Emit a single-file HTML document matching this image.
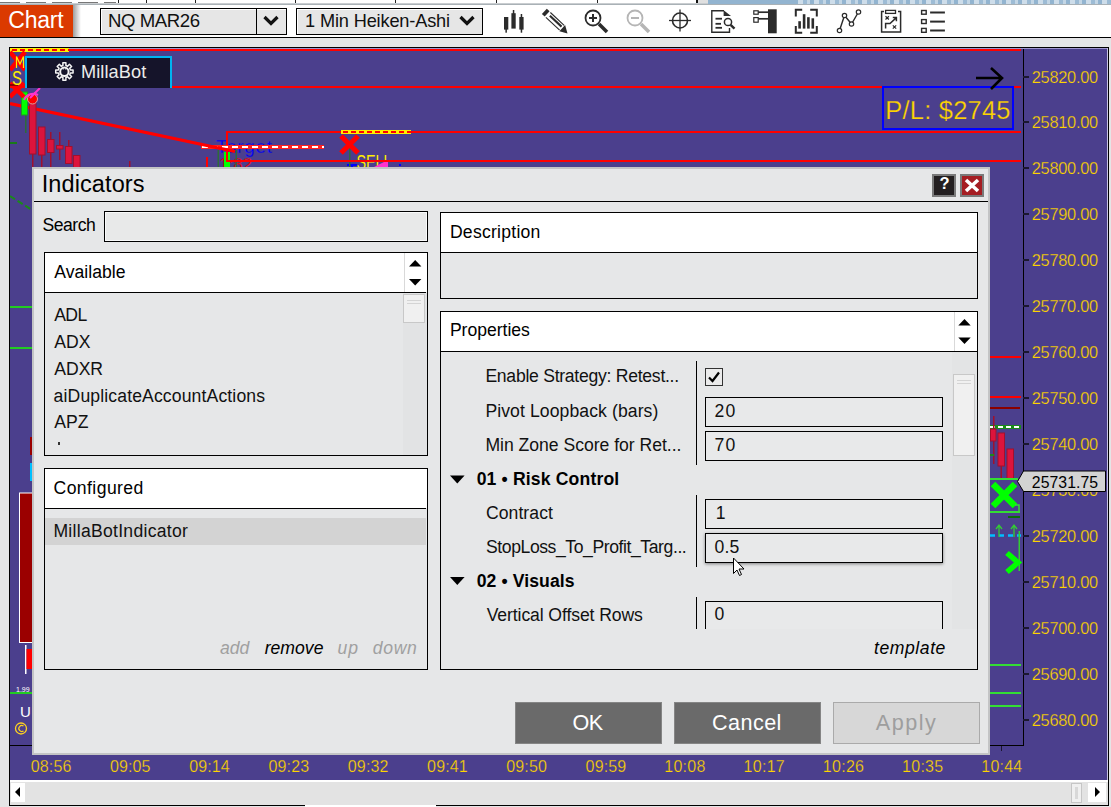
<!DOCTYPE html>
<html><head><meta charset="utf-8"><title>Indicators</title>
<style>
*{margin:0;padding:0;box-sizing:border-box}
html,body{width:1111px;height:807px;overflow:hidden;background:#e4e5e6;font-family:"Liberation Sans",sans-serif;position:relative}
.a{position:absolute}
.t{position:absolute;white-space:nowrap;line-height:1}
svg{position:absolute;left:0;top:0}
</style></head><body>

<div class="a" style="left:0px;top:0px;width:1111px;height:37px;background:#fff"></div>
<div class="a" style="left:0;top:2px;width:116px;height:1px;background:repeating-linear-gradient(90deg,#777 0 20px,transparent 20px 26px)"></div>
<div class="a" style="left:118px;top:0px;width:1px;height:4px;background:#222"></div>
<div class="a" style="left:146px;top:0px;width:1px;height:4px;background:#222"></div>
<div class="a" style="left:195px;top:0px;width:1px;height:4px;background:#222"></div>
<div class="a" style="left:295px;top:0px;width:1px;height:4px;background:#222"></div>
<div class="a" style="left:395px;top:0px;width:1px;height:4px;background:#222"></div>
<div class="a" style="left:496px;top:0px;width:1px;height:4px;background:#222"></div>
<div class="a" style="left:597px;top:0px;width:1px;height:4px;background:#222"></div>
<div class="a" style="left:696px;top:0px;width:2px;height:4px;background:#111"></div>
<div class="a" style="left:698px;top:0px;width:10px;height:4px;background:#e0e0e0"></div>
<div class="a" style="left:0px;top:3px;width:1111px;height:1px;background:#c9cdd0"></div>
<div class="a" style="left:0px;top:4px;width:1111px;height:1px;background:#a9b1b6"></div>
<div class="a" style="left:708px;top:0px;width:403px;height:4px;background:#92b4d0"></div>
<div class="a" style="left:798px;top:0;width:313px;height:4px;background:repeating-linear-gradient(90deg,rgba(255,255,255,.55) 0 5px,rgba(255,255,255,.1) 5px 9px,rgba(255,255,255,.45) 9px 12px,transparent 12px 16px)"></div>
<div class="a" style="left:0px;top:5px;width:73px;height:32px;background:#db3a00"></div>
<div class="a" style="left:73px;top:5px;width:8px;height:32px;background:linear-gradient(90deg,rgba(0,0,0,.38),rgba(0,0,0,0))"></div>
<div class="t" style="left:8.3px;top:9px;font-size:23.0px;color:#fff;letter-spacing:-0.24px;">Chart</div>
<div class="a" style="left:0px;top:37px;width:1111px;height:1px;background:#000"></div>
<div class="a" style="left:100px;top:8px;width:187px;height:27px;background:#e6e6e6;border:1px solid #000;box-shadow:inset 1px 1px 0 #fff"></div>
<div class="a" style="left:256px;top:8px;width:1px;height:27px;background:#000"></div>
<div class="t" style="left:107.9px;top:12px;font-size:18.6px;color:#111;letter-spacing:-0.40px;">NQ MAR26</div>
<div class="a" style="left:296px;top:8px;width:187px;height:27px;background:#e6e6e6;border:1px solid #000;box-shadow:inset 1px 1px 0 #fff"></div>
<div class="t" style="left:305.1px;top:12px;font-size:18.2px;color:#111;letter-spacing:-0.16px;">1 Min Heiken-Ashi</div>
<svg width="1111" height="40" style="left:0;top:0"><polyline points="264.5,17 271,23.5 277.5,17" fill="none" stroke="#111" stroke-width="3.2"/><polyline points="460.5,17 467,23.5 473.5,17" fill="none" stroke="#111" stroke-width="3.2"/></svg>
<svg width="1111" height="40" style="left:0;top:0" fill="none" stroke="#2b2b2b">
<g fill="#2b2b2b" stroke="none">
<rect x="504" y="17" width="4.3" height="12.6"/><rect x="505.4" y="29" width="1.5" height="3.7"/>
<rect x="511.4" y="13.2" width="4.3" height="15.4"/><rect x="512.8" y="10" width="1.5" height="4"/>
<rect x="519.3" y="17" width="4.3" height="12.6"/><rect x="520.7" y="14" width="1.5" height="3.5"/><rect x="520.7" y="29" width="1.5" height="3.7"/>
</g>
<g transform="translate(555.3,21.6) rotate(43)">
<rect x="-15" y="-3.6" width="3.8" height="7.2" fill="#2b2b2b" stroke="none"/>
<line x1="-9.8" y1="-3.3" x2="9" y2="-3.3" stroke-width="1.1"/>
<line x1="-9.8" y1="3.3" x2="9" y2="3.3" stroke-width="1.1"/>
<line x1="-8" y1="-0.6" x2="8" y2="-0.6" stroke-width="2.1"/>
<polygon points="9.5,-4.2 17,0.3 9.5,4.2" fill="#2b2b2b" stroke="none"/>
</g>
<circle cx="593" cy="18" r="7.5" stroke-width="1.8"/>
<line x1="589" y1="18" x2="597" y2="18" stroke-width="2"/><line x1="593" y1="14" x2="593" y2="22" stroke-width="2"/>
<line x1="599" y1="24" x2="607" y2="32" stroke-width="3.5"/>
<g stroke="#b5b5b5">
<circle cx="635" cy="18" r="7.5" stroke-width="1.8"/>
<line x1="631" y1="18" x2="639" y2="18" stroke-width="2"/>
<line x1="641" y1="24" x2="649" y2="32" stroke-width="3.5"/>
</g>
<circle cx="680" cy="20.5" r="7.5" stroke-width="1.6"/>
<line x1="669" y1="20.5" x2="691" y2="20.5" stroke-width="1.3"/>
<line x1="680" y1="9.5" x2="680" y2="31.5" stroke-width="1.3"/>
<path d="M724,10.8 H711.8 V32.2 H729.5 V28" stroke-width="1.4"/>
<polygon points="723.6,10.2 731,16 723.6,16" fill="#2b2b2b" stroke="none"/>
<line x1="715.5" y1="18.7" x2="722" y2="18.7" stroke-width="1.8"/>
<line x1="715.5" y1="23.8" x2="721" y2="23.8" stroke-width="1.8"/>
<line x1="715.5" y1="27.8" x2="722" y2="27.8" stroke-width="1.8"/>
<circle cx="728" cy="22" r="3.6" stroke-width="1.5"/>
<line x1="730.6" y1="24.8" x2="734.5" y2="28.7" stroke-width="2.4"/>
<rect x="768" y="9.3" width="8.7" height="24" fill="#2b2b2b" stroke="none"/>
<rect x="753.8" y="10.8" width="4.4" height="3.4" stroke-width="1.2"/>
<rect x="753.8" y="17.6" width="4.4" height="4.6" stroke-width="1.2"/>
<line x1="758.2" y1="12.2" x2="769" y2="12.2" stroke-width="1.7"/>
<line x1="758.2" y1="18.8" x2="769" y2="18.8" stroke-width="1.7"/>
<path d="M795.8,16.5 V9.8 H802.2 M810.2,9.8 H816.8 V16.5 M816.8,25.9 V32.8 H810.2 M802.2,32.8 H795.8 V25.9" stroke-width="2"/>
<g fill="#2b2b2b" stroke="none">
<rect x="798.3" y="21.2" width="2.6" height="7.4"/><rect x="802.8" y="14.2" width="2.6" height="14.4"/>
<rect x="807.1" y="17.2" width="2.6" height="11.4"/><rect x="811.5" y="18.3" width="2.6" height="10.3"/>
</g>
<polyline points="839.5,30.5 844.5,15.5 851.5,24 858.5,12" stroke-width="1.4"/>
<circle cx="839.5" cy="30.5" r="2.2" fill="#fff" stroke-width="1.2"/>
<circle cx="844.5" cy="15.5" r="2.2" fill="#fff" stroke-width="1.2"/>
<circle cx="851.5" cy="24" r="2.2" fill="#fff" stroke-width="1.2"/>
<circle cx="858.5" cy="12" r="2.2" fill="#fff" stroke-width="1.2"/>
<path d="M884,11.6 H881.6 V32 H900.6 V11.6 H898" stroke-width="1.5"/>
<rect x="885.6" y="10.4" width="9.9" height="3" stroke-width="1.3"/>
<path d="M885.5,16.3 l3.4,3.2 M888.9,16.3 l-3.4,3.2 M892.8,25.4 l3.4,3.2 M896.2,25.4 l-3.4,3.2" stroke-width="1.2"/>
<path d="M885.6,28.6 V23.6 H890 L896.4,17.6 M892.8,17.6 H896.4 V21.2" stroke-width="1.5"/>
<rect x="921.6" y="10.5" width="4.6" height="3.7" stroke-width="1.4"/>
<rect x="921.6" y="19.6" width="4.6" height="3.9" stroke-width="1.4"/>
<rect x="921.6" y="28.4" width="4.6" height="3.9" stroke-width="1.4"/>
<line x1="930.1" y1="12.5" x2="944.9" y2="12.5" stroke-width="2"/>
<line x1="930.1" y1="21.6" x2="944.9" y2="21.6" stroke-width="2"/>
<line x1="930.1" y1="30.5" x2="944.9" y2="30.5" stroke-width="2"/>
</svg>
<div class="a" style="left:9px;top:47px;width:1100px;height:759px;border:1px solid #000;background:#e3e3e3"></div>
<div class="a" style="left:10px;top:48px;width:1098px;height:732px;background:#4b3f8d"></div>
<div class="a" style="left:10px;top:780px;width:1098px;height:2px;background:#fff"></div>
<svg width="1111" height="807"><rect x="11" y="783" width="14" height="19" fill="#fff"/><polygon points="15,792 20,787 20,797" fill="#000"/><rect x="1071.5" y="783.5" width="10" height="19" fill="#f0f0f0" stroke="#c6c6c6"/><rect x="1075" y="787" width="3" height="12" fill="#d8d8d8"/><rect x="1088" y="783" width="18" height="19" fill="#fff"/><polygon points="1095,787 1100,792 1095,797" fill="#000"/></svg>
<div class="a" style="left:305px;top:805px;width:131px;height:2px;background:#fff"></div>
<div class="a" style="left:1023px;top:48px;width:1px;height:698px;background:#000"></div>
<div class="a" style="left:10px;top:745px;width:1014px;height:1px;background:#000"></div>
<div class="a" style="left:1001px;top:746px;width:1px;height:5px;background:#1b1730"></div>
<div class="a" style="left:10px;top:48px;width:1098px;height:1px;background:#9d94d0"></div>
<div class="a" style="left:1107px;top:48px;width:1px;height:732px;background:#c8c4e4"></div>
<div class="a" style="left:1023px;top:76px;width:6px;height:2px;background:#1b1730"></div>
<div class="t" style="left:1031.8px;top:69px;font-size:16.4px;color:#ffd400;letter-spacing:-0.30px;-webkit-text-stroke:0.25px #4b3f8d;">25820.00</div>
<div class="a" style="left:1023px;top:121px;width:6px;height:2px;background:#1b1730"></div>
<div class="t" style="left:1031.8px;top:114px;font-size:16.4px;color:#ffd400;letter-spacing:-0.30px;-webkit-text-stroke:0.25px #4b3f8d;">25810.00</div>
<div class="a" style="left:1023px;top:167px;width:6px;height:2px;background:#1b1730"></div>
<div class="t" style="left:1031.8px;top:160px;font-size:16.4px;color:#ffd400;letter-spacing:-0.30px;-webkit-text-stroke:0.25px #4b3f8d;">25800.00</div>
<div class="a" style="left:1023px;top:213px;width:6px;height:2px;background:#1b1730"></div>
<div class="t" style="left:1031.8px;top:206px;font-size:16.4px;color:#ffd400;letter-spacing:-0.30px;-webkit-text-stroke:0.25px #4b3f8d;">25790.00</div>
<div class="a" style="left:1023px;top:259px;width:6px;height:2px;background:#1b1730"></div>
<div class="t" style="left:1031.8px;top:252px;font-size:16.4px;color:#ffd400;letter-spacing:-0.30px;-webkit-text-stroke:0.25px #4b3f8d;">25780.00</div>
<div class="a" style="left:1023px;top:305px;width:6px;height:2px;background:#1b1730"></div>
<div class="t" style="left:1031.8px;top:298px;font-size:16.4px;color:#ffd400;letter-spacing:-0.30px;-webkit-text-stroke:0.25px #4b3f8d;">25770.00</div>
<div class="a" style="left:1023px;top:351px;width:6px;height:2px;background:#1b1730"></div>
<div class="t" style="left:1031.8px;top:344px;font-size:16.4px;color:#ffd400;letter-spacing:-0.30px;-webkit-text-stroke:0.25px #4b3f8d;">25760.00</div>
<div class="a" style="left:1023px;top:397px;width:6px;height:2px;background:#1b1730"></div>
<div class="t" style="left:1031.8px;top:390px;font-size:16.4px;color:#ffd400;letter-spacing:-0.30px;-webkit-text-stroke:0.25px #4b3f8d;">25750.00</div>
<div class="a" style="left:1023px;top:443px;width:6px;height:2px;background:#1b1730"></div>
<div class="t" style="left:1031.8px;top:436px;font-size:16.4px;color:#ffd400;letter-spacing:-0.30px;-webkit-text-stroke:0.25px #4b3f8d;">25740.00</div>
<div class="a" style="left:1023px;top:489px;width:6px;height:2px;background:#1b1730"></div>
<div class="t" style="left:1031.8px;top:482px;font-size:16.4px;color:#ffd400;letter-spacing:-0.30px;-webkit-text-stroke:0.25px #4b3f8d;">25730.00</div>
<div class="a" style="left:1023px;top:535px;width:6px;height:2px;background:#1b1730"></div>
<div class="t" style="left:1031.8px;top:528px;font-size:16.4px;color:#ffd400;letter-spacing:-0.30px;-webkit-text-stroke:0.25px #4b3f8d;">25720.00</div>
<div class="a" style="left:1023px;top:581px;width:6px;height:2px;background:#1b1730"></div>
<div class="t" style="left:1031.8px;top:574px;font-size:16.4px;color:#ffd400;letter-spacing:-0.30px;-webkit-text-stroke:0.25px #4b3f8d;">25710.00</div>
<div class="a" style="left:1023px;top:627px;width:6px;height:2px;background:#1b1730"></div>
<div class="t" style="left:1031.8px;top:620px;font-size:16.4px;color:#ffd400;letter-spacing:-0.30px;-webkit-text-stroke:0.25px #4b3f8d;">25700.00</div>
<div class="a" style="left:1023px;top:673px;width:6px;height:2px;background:#1b1730"></div>
<div class="t" style="left:1031.8px;top:666px;font-size:16.4px;color:#ffd400;letter-spacing:-0.30px;-webkit-text-stroke:0.25px #4b3f8d;">25690.00</div>
<div class="a" style="left:1023px;top:719px;width:6px;height:2px;background:#1b1730"></div>
<div class="t" style="left:1031.8px;top:712px;font-size:16.4px;color:#ffd400;letter-spacing:-0.30px;-webkit-text-stroke:0.25px #4b3f8d;">25680.00</div>
<div class="t" style="left:30.8px;top:759px;font-size:16.0px;color:#ffd400;letter-spacing:0.14px;-webkit-text-stroke:0.25px #4b3f8d;">08:56</div>
<div class="t" style="left:110.0px;top:759px;font-size:16.0px;color:#ffd400;letter-spacing:0.12px;-webkit-text-stroke:0.25px #4b3f8d;">09:05</div>
<div class="t" style="left:189.3px;top:759px;font-size:16.0px;color:#ffd400;letter-spacing:0.08px;-webkit-text-stroke:0.25px #4b3f8d;">09:14</div>
<div class="t" style="left:268.5px;top:759px;font-size:16.0px;color:#ffd400;letter-spacing:0.14px;-webkit-text-stroke:0.25px #4b3f8d;">09:23</div>
<div class="t" style="left:347.8px;top:759px;font-size:16.0px;color:#ffd400;letter-spacing:0.16px;-webkit-text-stroke:0.25px #4b3f8d;">09:32</div>
<div class="t" style="left:427.1px;top:759px;font-size:16.0px;color:#ffd400;letter-spacing:0.16px;-webkit-text-stroke:0.25px #4b3f8d;">09:41</div>
<div class="t" style="left:506.3px;top:759px;font-size:16.0px;color:#ffd400;letter-spacing:0.12px;-webkit-text-stroke:0.25px #4b3f8d;">09:50</div>
<div class="t" style="left:585.6px;top:759px;font-size:16.0px;color:#ffd400;letter-spacing:0.14px;-webkit-text-stroke:0.25px #4b3f8d;">09:59</div>
<div class="t" style="left:664.3px;top:759px;font-size:16.0px;color:#ffd400;letter-spacing:0.26px;-webkit-text-stroke:0.25px #4b3f8d;">10:08</div>
<div class="t" style="left:743.5px;top:759px;font-size:16.0px;color:#ffd400;letter-spacing:0.30px;-webkit-text-stroke:0.25px #4b3f8d;">10:17</div>
<div class="t" style="left:822.8px;top:759px;font-size:16.0px;color:#ffd400;letter-spacing:0.28px;-webkit-text-stroke:0.25px #4b3f8d;">10:26</div>
<div class="t" style="left:902.1px;top:759px;font-size:16.0px;color:#ffd400;letter-spacing:0.26px;-webkit-text-stroke:0.25px #4b3f8d;">10:35</div>
<div class="t" style="left:981.3px;top:759px;font-size:16.0px;color:#ffd400;letter-spacing:0.22px;-webkit-text-stroke:0.25px #4b3f8d;">10:44</div>
<svg width="1111" height="807"><defs><clipPath id="cc"><rect x="10" y="48" width="1013" height="697"/></clipPath></defs><g clip-path="url(#cc)">
<rect x="10" y="49" width="1011" height="2" fill="#ff0000"/>
<rect x="10" y="48" width="59" height="4" fill="#ffee00"/>
<line x1="12" y1="50" x2="69" y2="50" stroke="#ff0000" stroke-width="2" stroke-dasharray="5 3"/>
<rect x="10" y="86" width="1011" height="2" fill="#ff0000"/>
<text x="356.5" y="169" font-size="21" fill="#ffee00" font-family="Liberation Sans" textLength="35" lengthAdjust="spacingAndGlyphs">SELL</text>
<polygon points="372,168 388,160 388,168" fill="#ff33cc"/>
<rect x="347" y="164" width="10" height="2" fill="#0000ff"/><rect x="351" y="164" width="2" height="4" fill="#0000ff"/>
<rect x="399" y="164" width="2" height="2" fill="#0000ff"/>
<rect x="349" y="148" width="1.5" height="20" fill="#2e6b3a"/>
<text x="216" y="153" font-size="19" fill="#0000ff" font-family="Liberation Sans" textLength="56" stroke="#4b3f8d" stroke-width="0.3">Target</text>
<text x="219" y="170" font-size="17" fill="#ff0000" font-family="Liberation Sans" stroke="#4b3f8d" stroke-width="0.3">1:82</text>
<rect x="206" y="157" width="2" height="11" fill="#ff0000"/>
<rect x="217.5" y="150" width="1.5" height="18" fill="#2e6b3a"/>
<rect x="235.5" y="150" width="1.5" height="18" fill="#2e6b3a"/>
<rect x="224" y="152" width="6" height="16" fill="#00ff00"/>
<rect x="226" y="131" width="795" height="2" fill="#ff0000"/>
<rect x="226" y="131" width="2" height="31" fill="#ff0000"/>
<rect x="226" y="160" width="795" height="2" fill="#ff0000"/>
<rect x="201" y="145" width="123" height="4" fill="#ff2020"/>
<line x1="202" y1="147" x2="324" y2="147" stroke="#ffffff" stroke-width="2" stroke-dasharray="6 4"/>
<line x1="10" y1="103.5" x2="235" y2="151.5" stroke="#ff0000" stroke-width="3.3"/>
<rect x="341" y="130" width="70" height="4" fill="#ffee00"/>
<line x1="343" y1="132" x2="411" y2="132" stroke="#ff0000" stroke-width="2" stroke-dasharray="5 3"/>
<path d="M341,136 L358,153 M358,136 L341,153" stroke="#ff0000" stroke-width="5.2"/>
<rect x="25" y="115" width="1.5" height="18" fill="#2e6b3a"/>
<rect x="21.5" y="92" width="6" height="23" fill="#00ff00" stroke="#1d9b1d" stroke-width="1"/>
<g fill="#dc143c" stroke="#a0102e" stroke-width="1">
<rect x="29.5" y="100" width="6.5" height="54"/>
<rect x="38.5" y="127" width="6.5" height="28"/>
<rect x="47.5" y="139.5" width="6.5" height="13"/>
<rect x="56.5" y="145.5" width="6.5" height="3.5"/>
<rect x="65.5" y="146.5" width="6.5" height="17"/>
<rect x="73.5" y="155.5" width="6.5" height="12"/>
</g>
<g fill="#a0102e">
<rect x="32" y="154" width="1.5" height="13"/><rect x="41" y="155" width="1.5" height="12"/>
<rect x="50" y="132" width="1.5" height="8"/><rect x="50" y="152" width="1.5" height="15"/>
<rect x="59" y="132" width="1.5" height="14"/><rect x="59" y="149" width="1.5" height="11"/>
<rect x="68" y="140" width="1.5" height="7"/>
<rect x="129" y="161" width="1.5" height="6"/>
</g>
<rect x="10" y="142" width="7" height="2" fill="#1a7a1a"/>
<circle cx="32.5" cy="99" r="5" fill="#ff0000" stroke="#d8a0a0" stroke-width="1"/>
<path d="M10,52 L25,70 M25,52 L10,70" stroke="#ff0000" stroke-width="4.5"/>
<path d="M10,83 L24,97 M24,83 L10,97" stroke="#ff0000" stroke-width="4.5"/>
<rect x="10" y="84" width="8" height="2" fill="#8b0000"/>
<path d="M16.5,68 V56.5 L20,64 L23.5,56.5 V68" stroke="#ffee00" stroke-width="1.2" fill="none"/>
<text x="12" y="85" font-size="20" fill="#ffee00" font-family="Liberation Sans" textLength="10" lengthAdjust="spacingAndGlyphs">S</text>
<path d="M24,100 C 26,95 32,92 38,95 M30,98 L40,88" stroke="#ff33cc" stroke-width="2" fill="none"/>
<rect x="883" y="87" width="130" height="42" fill="none" stroke="#0000ff" stroke-width="2"/>
<path d="M976,78 H1001 M991,68 L1002,78 L991,89" stroke="#000" stroke-width="2.6" fill="none"/>
<line x1="10" y1="196" x2="32" y2="210" stroke="#1a8a1a" stroke-width="2" stroke-dasharray="6 3"/>
<rect x="10" y="306" width="22" height="2" fill="#22cc22"/>
<rect x="10" y="347" width="22" height="2" fill="#22cc22"/>
<rect x="30" y="437" width="2" height="18" fill="#9b0000"/>
<rect x="30" y="463" width="2" height="18" fill="#00c0ff"/>
<rect x="19.5" y="493" width="13" height="149.5" fill="#9b0000" stroke="#ffffff" stroke-width="1"/>
<rect x="25" y="645" width="1.5" height="29" fill="#ffffff"/>
<rect x="26.5" y="649" width="6" height="20" fill="#ff0000"/>
<rect x="10" y="692" width="22" height="2" fill="#22cc22"/>
<text x="16" y="692" font-size="7" fill="#ffffff" font-family="Liberation Sans">1.99</text>
<text x="20" y="717" font-size="15" fill="#ffffff" font-family="Liberation Sans">U</text>
<circle cx="21" cy="728.5" r="5.5" fill="none" stroke="#ffd21f" stroke-width="1.3"/>
<path d="M23.5,726 A3,3 0 1 0 23.5,731" fill="none" stroke="#ffd21f" stroke-width="1.2"/>
<rect x="990" y="356" width="31" height="2" fill="#ff0000"/>
<rect x="990" y="396" width="31" height="2" fill="#ff0000"/>
<rect x="990" y="407" width="30" height="2" fill="#8b0000"/>
<rect x="990" y="425" width="31" height="4" fill="#1a8a1a"/>
<line x1="990" y1="427" x2="1021" y2="427" stroke="#fff" stroke-width="2" stroke-dasharray="5 3"/>
<g fill="#a0102e">
<rect x="993" y="416" width="1.5" height="48"/><rect x="1000.5" y="466" width="1.5" height="14"/>
</g>
<g fill="#dc143c" stroke="#a0102e" stroke-width="1">
<rect x="990.5" y="429" width="5.5" height="12"/>
<rect x="998" y="433" width="6.5" height="33"/>
<rect x="1007" y="449" width="6.5" height="30"/>
</g>
<rect x="990" y="454" width="4" height="2" fill="#1a8a1a"/>
<rect x="990" y="478" width="28" height="2" fill="#33dd33"/>
<rect x="990" y="511" width="30" height="2" fill="#33dd33"/>
<rect x="1008" y="516" width="12" height="2" fill="#0a6a0a"/>
<path d="M993,484 L1015,506 M1015,484 L993,506" stroke="#00ff00" stroke-width="6.5"/>
<path d="M1015,505 H1019 V513" stroke="#33dd33" stroke-width="1.5" fill="none"/>
<line x1="990" y1="535.5" x2="1021" y2="535.5" stroke="#00bfff" stroke-width="2.5" stroke-dasharray="5 4"/>
<path d="M999,537 V526 M996,529 L999,525 L1002,529 M1014,537 V526 M1011,529 L1014,525 L1017,529" stroke="#33cc33" stroke-width="1.3" fill="none"/>
<rect x="1018.5" y="531" width="1.5" height="40" fill="#33cc33"/>
<path d="M1007,553 L1018,562.5 L1007,572" stroke="#00ff00" stroke-width="5.5" fill="none"/>
<rect x="990" y="664" width="31" height="2" fill="#33dd33"/>
<rect x="990" y="692" width="31" height="2" fill="#33dd33"/>
<rect x="990" y="705" width="31" height="2" fill="#33dd33"/>
</g>
<polygon points="1017.5,481.5 1023.5,471 1105.5,471 1105.5,491.5 1023.5,491.5" fill="#d3d3d3" stroke="#000" stroke-width="1"/>
</svg>
<div class="t" style="left:885.3px;top:98px;font-size:25.4px;color:#ffd400;letter-spacing:0.26px;-webkit-text-stroke:0.25px #4b3f8d;">P/L: $2745</div>
<div class="t" style="left:1031.8px;top:475px;font-size:15.8px;color:#000;letter-spacing:0.05px;">25731.75</div>
<div class="a" style="left:25px;top:56px;width:147px;height:32px;background:#15142a;border:2px solid #00b4f0;border-bottom:none"></div>
<svg width="1111" height="807"><g fill="none" stroke="#f4f4f4" stroke-width="1.5" stroke-linejoin="round">
<path d="M62.90,65.48 L62.87,62.83 L65.93,62.83 L65.90,65.48 L67.59,66.19 L69.45,64.29 L71.61,66.45 L69.71,68.31 L70.42,70.00 L73.07,69.97 L73.07,73.03 L70.42,73.00 L69.71,74.69 L71.61,76.55 L69.45,78.71 L67.59,76.81 L65.90,77.52 L65.93,80.17 L62.87,80.17 L62.90,77.52 L61.21,76.81 L59.35,78.71 L57.19,76.55 L59.09,74.69 L58.38,73.00 L55.73,73.03 L55.73,69.97 L58.38,70.00 L59.09,68.31 L57.19,66.45 L59.35,64.29 L61.21,66.19 Z"/>
<circle cx="64.4" cy="71.8" r="4.2" stroke-width="2"/>
</g><g fill="#f4f4f4"><rect x="62.6" y="68.3" width="1.2" height="1.2"/><rect x="65.2" y="68.3" width="1.2" height="1.2"/></g></svg>
<div class="t" style="left:80.9px;top:63px;font-size:18.2px;color:#ececec;letter-spacing:0.11px;">MillaBot</div>
<div class="a" style="left:32px;top:167px;width:958px;height:588px;background:#e6e7e8;border:2px solid #c3c4c5"></div>
<div class="a" style="left:34px;top:201px;width:954px;height:1px;background:#000"></div>
<div class="t" style="left:41.7px;top:173px;font-size:23.5px;color:#000;letter-spacing:0.10px;">Indicators</div>
<div class="a" style="left:932px;top:174px;width:24px;height:23px;background:#231f20;border:2px solid #7a7a7a"></div>
<div class="a" style="left:960px;top:174px;width:24px;height:23px;background:#a51d22;border:2px solid #7a7a7a"></div>
<svg width="1111" height="807">
<text x="944.5" y="188.8" font-size="16.5" font-weight="bold" fill="#fff" text-anchor="middle" font-family="Liberation Sans">?</text>
<path d="M966,180 L978,191 M978,180 L966,191" stroke="#fff" stroke-width="3.6"/>
</svg>
<div class="t" style="left:42.6px;top:217px;font-size:17.6px;color:#000;letter-spacing:-0.53px;">Search</div>
<div class="a" style="left:104px;top:211px;width:324px;height:31px;background:#e8e9e9;border:1px solid #000;box-shadow:inset 0 0 0 1px rgba(255,255,255,.75)"></div>
<div class="a" style="left:44px;top:252px;width:384px;height:204px;border:1px solid #000;background:#e6e7e8"></div>
<div class="a" style="left:45px;top:253px;width:382px;height:39px;background:#fff"></div>
<div class="a" style="left:45px;top:292px;width:381px;height:1px;background:#000"></div>
<div class="a" style="left:404px;top:253px;width:1px;height:39px;background:#d9d9d9"></div>
<div class="t" style="left:54.2px;top:264px;font-size:17.6px;color:#000;letter-spacing:0.03px;">Available</div>
<svg width="1111" height="807">
<rect x="403" y="293" width="24" height="162" fill="#e2e3e4"/>
<polygon points="409,266.5 415.2,260 421.4,266.5" fill="#000"/>
<polygon points="409,279 415.2,285.5 421.4,279" fill="#000"/>
<rect x="403.5" y="294.5" width="21" height="28" fill="#f0f0f0" stroke="#c8c8c8"/>
<line x1="407" y1="300.5" x2="421" y2="300.5" stroke="#d4d4d4"/>
<line x1="407" y1="303.5" x2="421" y2="303.5" stroke="#d4d4d4"/>
</svg>
<div class="t" style="left:54.2px;top:307px;font-size:17.6px;color:#111;letter-spacing:-0.56px;">ADL</div>
<div class="t" style="left:54.2px;top:334px;font-size:17.6px;color:#111;">ADX</div>
<div class="t" style="left:54.2px;top:361px;font-size:17.6px;color:#111;">ADXR</div>
<div class="t" style="left:53.6px;top:388px;font-size:17.6px;color:#111;letter-spacing:0.13px;">aiDuplicateAccountActions</div>
<div class="t" style="left:54.2px;top:414px;font-size:17.6px;color:#111;">APZ</div>
<div class="a" style="left:58px;top:442px;width:2px;height:3px;background:#333"></div>
<div class="a" style="left:44px;top:468px;width:384px;height:202px;border:1px solid #000;background:#e6e7e8"></div>
<div class="a" style="left:45px;top:469px;width:382px;height:39px;background:#fff"></div>
<div class="a" style="left:45px;top:508px;width:381px;height:1px;background:#000"></div>
<div class="t" style="left:53.5px;top:480px;font-size:17.6px;color:#000;letter-spacing:0.42px;">Configured</div>
<div class="a" style="left:45px;top:518px;width:381px;height:27px;background:#d3d3d3"></div>
<div class="t" style="left:53.4px;top:523px;font-size:17.6px;color:#111;letter-spacing:0.28px;">MillaBotIndicator</div>
<div class="t" style="left:219.9px;top:640px;font-size:17.6px;color:#a0a0a0;font-style:italic;">add</div>
<div class="t" style="left:264.7px;top:640px;font-size:17.6px;color:#000;font-style:italic;letter-spacing:0.02px;">remove</div>
<div class="t" style="left:337.6px;top:640px;font-size:17.6px;color:#a0a0a0;font-style:italic;letter-spacing:0.90px;">up</div>
<div class="t" style="left:372.8px;top:640px;font-size:17.6px;color:#a0a0a0;font-style:italic;letter-spacing:0.65px;">down</div>
<div class="a" style="left:440px;top:212px;width:538px;height:87px;border:1px solid #000;background:#e6e7e8"></div>
<div class="a" style="left:441px;top:213px;width:536px;height:39px;background:#fff"></div>
<div class="a" style="left:441px;top:252px;width:536px;height:1px;background:#000"></div>
<div class="t" style="left:449.9px;top:224px;font-size:17.6px;color:#000;letter-spacing:0.25px;">Description</div>
<div class="a" style="left:440px;top:311px;width:538px;height:359px;border:1px solid #000;background:#e6e7e8"></div>
<div class="a" style="left:441px;top:312px;width:536px;height:39px;background:#fff"></div>
<div class="a" style="left:441px;top:351px;width:536px;height:1px;background:#000"></div>
<div class="a" style="left:954px;top:312px;width:1px;height:39px;background:#d9d9d9"></div>
<div class="t" style="left:449.9px;top:322px;font-size:17.6px;color:#000;letter-spacing:-0.03px;">Properties</div>
<svg width="1111" height="807">
<rect x="952" y="352" width="25" height="277" fill="#e3e4e5"/>
<polygon points="958.3,325.5 964.5,319 970.7,325.5" fill="#000"/>
<polygon points="958.3,337.5 964.5,344 970.7,337.5" fill="#000"/>
<rect x="953.5" y="374.5" width="21" height="81" fill="#f0f0f0" stroke="#c8c8c8"/>
<line x1="957" y1="380.5" x2="971" y2="380.5" stroke="#d4d4d4"/>
<line x1="957" y1="383.5" x2="971" y2="383.5" stroke="#d4d4d4"/>
</svg>
<div class="a" style="left:696px;top:361px;width:1px;height:104px;background:#000"></div>
<div class="a" style="left:696px;top:495px;width:1px;height:72px;background:#000"></div>
<div class="a" style="left:696px;top:597px;width:1px;height:32px;background:#000"></div>
<div class="t" style="left:485.4px;top:368px;font-size:17.6px;color:#111;letter-spacing:-0.27px;">Enable Strategy: Retest...</div>
<div class="a" style="left:705px;top:368px;width:18px;height:18px;background:#ebebeb;border:1px solid #333"></div>
<svg width="1111" height="807"><path d="M709,377.5 L712.5,381 L719,372.5" stroke="#000" stroke-width="2.2" fill="none"/></svg>
<div class="t" style="left:485.4px;top:403px;font-size:17.6px;color:#111;letter-spacing:0.09px;">Pivot Loopback (bars)</div>
<div class="a" style="left:705px;top:397px;width:238px;height:30px;background:#e8e9ea;border:1px solid #000;"></div>
<div class="t" style="left:714.5px;top:403px;font-size:17.6px;color:#111;letter-spacing:1.15px;">20</div>
<div class="t" style="left:485.4px;top:437px;font-size:17.6px;color:#111;letter-spacing:-0.02px;">Min Zone Score for Ret...</div>
<div class="a" style="left:705px;top:431px;width:238px;height:30px;background:#e8e9ea;border:1px solid #000;"></div>
<div class="t" style="left:714.5px;top:437px;font-size:17.6px;color:#111;letter-spacing:1.15px;">70</div>
<svg width="1111" height="807"><polygon points="450,475.5 464.6,475.5 457.3,483.5" fill="#000"/><polygon points="450,577 464.6,577 457.3,585" fill="#000"/></svg>
<div class="t" style="left:476.7px;top:471px;font-size:17.6px;color:#000;font-weight:bold;letter-spacing:0.15px;">01 • Risk Control</div>
<div class="t" style="left:485.9px;top:505px;font-size:17.6px;color:#111;letter-spacing:0.08px;">Contract</div>
<div class="a" style="left:705px;top:499px;width:238px;height:30px;background:#e8e9ea;border:1px solid #000;"></div>
<div class="t" style="left:715.7px;top:505px;font-size:17.6px;color:#111;">1</div>
<div class="t" style="left:486.0px;top:539px;font-size:17.6px;color:#111;letter-spacing:-0.42px;">StopLoss_To_Profit_Targ...</div>
<div class="a" style="left:705px;top:533px;width:238px;height:30px;background:#e8e9ea;border:1px solid #000;box-shadow:0 1px 3px rgba(0,0,0,.45);"></div>
<div class="t" style="left:714.4px;top:539px;font-size:17.6px;color:#111;letter-spacing:0.22px;">0.5</div>
<div class="t" style="left:476.7px;top:573px;font-size:17.6px;color:#000;font-weight:bold;letter-spacing:0.10px;">02 • Visuals</div>
<div class="t" style="left:486.7px;top:607px;font-size:17.6px;color:#111;letter-spacing:-0.10px;">Vertical Offset Rows</div>
<div class="a" style="left:705px;top:601px;width:238px;height:28px;background:#e8e9ea;border:1px solid #000;border-bottom:none"></div>
<div class="t" style="left:714.4px;top:606px;font-size:17.6px;color:#111;">0</div>
<div class="a" style="left:441px;top:629px;width:536px;height:40px;background:#e6e7e8"></div>
<div class="t" style="left:874.1px;top:640px;font-size:17.6px;color:#000;font-style:italic;letter-spacing:0.54px;">template</div>
<svg width="1111" height="807"><path d="M733.5,558 V573.5 L737,570 L739.5,575.5 L741.5,574.5 L739,569 L744,569 Z" fill="#fff" stroke="#000" stroke-width="1"/></svg>
<div class="a" style="left:515px;top:702px;width:147px;height:42px;background:#6a6a6a;border:1px solid #858585"></div>
<div class="a" style="left:674px;top:702px;width:147px;height:42px;background:#6a6a6a;border:1px solid #858585"></div>
<div class="a" style="left:833px;top:702px;width:147px;height:42px;background:#d7d7d7;border:1px solid #aaaaaa"></div>
<div class="t" style="left:572.5px;top:712px;font-size:21.6px;color:#fff;letter-spacing:-0.62px;">OK</div>
<div class="t" style="left:712.1px;top:712px;font-size:21.6px;color:#fff;letter-spacing:0.42px;">Cancel</div>
<div class="t" style="left:875.8px;top:712px;font-size:21.6px;color:#9e9e9e;letter-spacing:1.48px;">Apply</div>
</body></html>
